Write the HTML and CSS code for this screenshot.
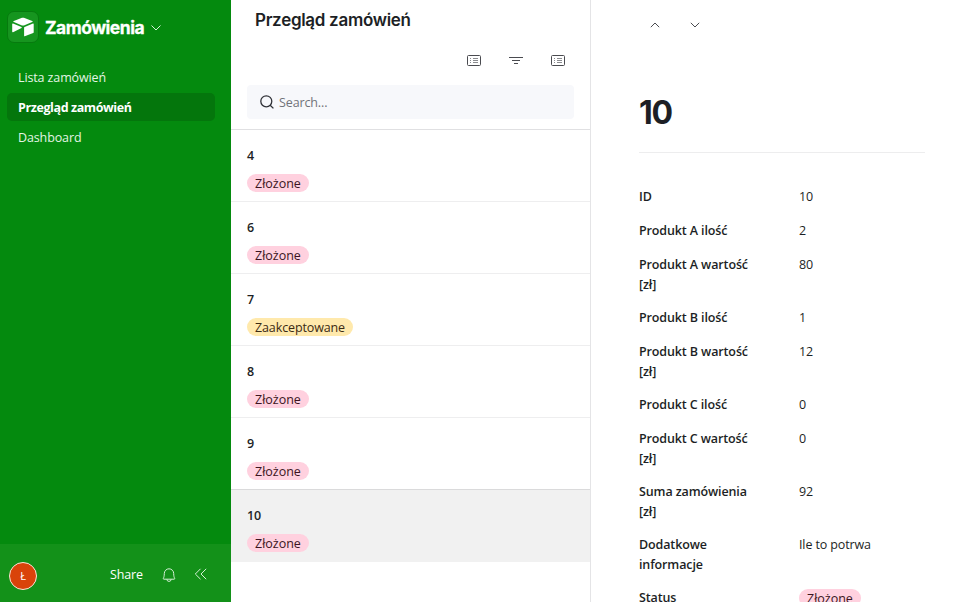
FILE: index.html
```html
<!DOCTYPE html>
<html lang="pl">
<head>
<meta charset="utf-8">
<title>Zamówienia</title>
<link rel="stylesheet" href="styles.css">
</head>
<body>
<div class="app">
  <aside class="sidebar">
    <header class="brand">
      <span class="logo"><svg width="24" height="20" viewBox="0 0 24 20" fill="#fff"><path d="M11 .8c.6-.2 1.300-.2 1.900 0l8.300 3.200c.6.3.6.9 0 1.100l-8.300 3.300c-.6.2-1.300.2-1.900 0L2.800 5.100c-.6-.2-.6-.8 0-1.100z"/><path d="M22.700 7v8.200c0 .4-.2.700-.5.800l-8.500 3.300c-.3.100-.6-.1-.6-.5v-8.200c0-.3.200-.6.5-.7L22 6.500c.4-.1.700.1.700.5z"/><path d="M10.500 11 2 15.200c-.4.200-.8 0-.8-.4V7c0-.4.400-.7.800-.5l8.500 3.600c.4.200.4.700 0 .9z"/></svg></span>
      <span class="brand-name">Zamówienia</span>
      <svg class="brand-chevron" width="12" height="8" viewBox="0 0 12 8"><path d="M1.500 1.500L6 6l4.500-4.500"/></svg>
    </header>
    <nav class="nav">
      <a class="nav-item">Lista zamówień</a>
      <a class="nav-item active">Przegląd zamówień</a>
      <a class="nav-item">Dashboard</a>
    </nav>
    <footer class="side-footer">
      <span class="avatar">Ł</span>
      <span class="share">Share</span>
      <svg class="bell" width="14" height="16" viewBox="0 0 14 16"><path d="M2.300 6.500a4.700 4.700 0 0 1 9.400 0c0 2.600.5 4 1 4.900.2.400 0 .8-.5.800H1.800c-.5 0-.7-.4-.5-.8.500-.9 1-2.300 1-4.900zM4.900 12.300a2.100 2.100 0 0 0 4.200 0"/></svg>
      <svg class="collapse" width="14" height="14" viewBox="0 0 14 14"><path d="M6.500 1.800L1.300 7l5.200 5.200M12.200 1.800L7 7l5.200 5.200"/></svg>
    </footer>
  </aside>

  <section class="list">
    <header class="list-header">
      <h1 class="list-title">Przegląd zamówień</h1>
      <div class="tools">
        <svg width="14" height="12" viewBox="0 0 14 12"><rect x=".5" y="1.500" width="13" height="10" rx="1"/><path class="fine" d="M3 4.500h1M6 4.500h5M3 6.500h1M6 6.500h5M3 8.500h1M6 8.500h5"/></svg>
        <svg width="14" height="12" viewBox="0 0 14 12"><path d="M0 3.500h14M3 6.500h8M5 9.500h4"/></svg>
        <svg width="14" height="12" viewBox="0 0 14 12"><rect x=".5" y="1.500" width="13" height="10" rx="1"/><path class="fine" d="M3 4.500h1M6 4.500h5M3 6.500h1M6 6.500h5M3 8.500h1M6 8.500h5"/></svg>
      </div>
      <div class="search">
        <svg width="14" height="14" viewBox="0 0 14 14"><circle cx="6.300" cy="6.300" r="5.500"/><path d="M10.200 10.200l3.200 3.200"/></svg>
        <span class="placeholder">Search...</span>
      </div>
    </header>
    <div class="records">
      <article class="record"><b class="record-id">4</b><span class="pill pink">Złożone</span></article>
      <article class="record"><b class="record-id">6</b><span class="pill pink">Złożone</span></article>
      <article class="record"><b class="record-id">7</b><span class="pill yellow">Zaakceptowane</span></article>
      <article class="record"><b class="record-id">8</b><span class="pill pink">Złożone</span></article>
      <article class="record before-selected"><b class="record-id">9</b><span class="pill pink">Złożone</span></article>
      <article class="record selected"><b class="record-id">10</b><span class="pill pink">Złożone</span></article>
    </div>
  </section>

  <main class="detail">
    <div class="pager">
      <svg width="10" height="6" viewBox="0 0 10 6"><path d="M.8 5.200L5 1l4.200 4.200"/></svg>
      <svg width="10" height="6" viewBox="0 0 10 6"><path d="M.8.800L5 5 9.200.800"/></svg>
    </div>
    <h2 class="detail-title">10</h2>
    <dl class="fields">
      <div class="field"><dt>ID</dt><dd>10</dd></div>
      <div class="field"><dt>Produkt A ilość</dt><dd>2</dd></div>
      <div class="field"><dt>Produkt A wartość [zł]</dt><dd>80</dd></div>
      <div class="field"><dt>Produkt B ilość</dt><dd>1</dd></div>
      <div class="field"><dt>Produkt B wartość [zł]</dt><dd>12</dd></div>
      <div class="field"><dt>Produkt C ilość</dt><dd>0</dd></div>
      <div class="field"><dt>Produkt C wartość [zł]</dt><dd>0</dd></div>
      <div class="field"><dt>Suma zamówienia [zł]</dt><dd>92</dd></div>
      <div class="field"><dt>Dodatkowe informacje</dt><dd>Ile to potrwa</dd></div>
      <div class="field"><dt>Status</dt><dd><span class="pill pink">Złożone</span></dd></div>
    </dl>
  </main>
</div>
</body>
</html>
```
FILE: styles.css
```css
* { box-sizing: border-box; }
body {
  margin: 0;
  font: 12.5px/19.5px "Open Sans", "Noto Sans", sans-serif;
  letter-spacing: -.12px;
  color: #1d1f25;
  background: #fff;
}
svg { display: block; flex: none; fill: none; stroke: #4a4b50; stroke-width: 1; }
.app { display: flex; width: 957px; height: 602px; overflow: hidden; }

.sidebar { display: flex; flex-direction: column; width: 231px; background: #048a0e; color: #e3f5e4; }
.brand { display: flex; align-items: center; height: 54px; padding-left: 7px; }
.logo {
  display: flex; align-items: center; justify-content: center;
  width: 32px; height: 32px; border-radius: 7px;
  background: #16951f; border: 1px solid #067a0e;
}
.logo svg { fill: #fff; stroke: none; }
.brand-name { margin-left: 6px; padding-top: 2px; font: 700 17.5px/24px Inter, sans-serif; letter-spacing: -.5px; color: #fff; -webkit-text-stroke: .3px #fff; }
.brand-chevron { margin: 2px 0 0 6px; stroke: #d5f0d6; }
.nav { display: flex; flex-direction: column; gap: 2px; padding: 9px 16px 0 7px; }
.nav-item { height: 28px; padding-left: 11px; line-height: 30px; border-radius: 5px; }
.nav-item.active { background: #04760c; color: #fff; font-weight: 700; letter-spacing: -.4px; }
.side-footer { display: flex; align-items: center; height: 58px; margin-top: auto; padding: 2px 23px 0 9px; background: #139119; }
.avatar {
  width: 28px; height: 28px; margin-top: 4px; border: 1.5px solid #fbe6d8; border-radius: 50%;
  background: #d9430a; color: #fff; font-size: 11px; line-height: 26px; text-align: center;
}
.share { margin-left: auto; padding-top: 2px; font-weight: 500; color: #fff; }
.bell { margin: 2px 0 0 19px; stroke: #d5f0d6; }
.collapse { margin-left: 18px; stroke: #d5f0d6; }

.list { width: 360px; border-right: 1px solid #e4e4e6; }
.list-header { height: 130px; padding: 8px 16px 0; border-bottom: 1px solid #e0e0e2; }
.list-title { margin: 0 0 0 8px; font: 600 17px/24px Inter, sans-serif; letter-spacing: -.3px; }
.tools { display: flex; justify-content: flex-end; gap: 28px; margin: 22px 9px 19px 0; }
.tools .fine { stroke: #8b8c90; }
.search { display: flex; align-items: center; gap: 5px; height: 34px; padding-left: 13px; border-radius: 4px; background: #f7f8fb; color: #717379; }
.search svg { stroke: #303238; stroke-width: 1.3; }
.placeholder { padding-top: 2px; }
.record { height: 72px; padding: 16px 16px 0; border-bottom: 1px solid #eeeeef; }
.record-id { display: block; margin-bottom: 8px; font-weight: 600; line-height: 20px; }
.record.before-selected { border-bottom-color: #dadadb; }
.record.selected { background: #f1f1f1; border-bottom-color: #f1f1f1; }
.pill { display: block; width: fit-content; height: 18px; padding: 0 8px; border-radius: 9px; line-height: 20px; }
.pill.pink { letter-spacing: 0; }
.pink { background: #ffd1df; color: #3b1522; }
.yellow { background: #ffe9ac; color: #3b2a12; }

.detail { flex: 1; padding: 22px 32px 0 48px; }
.pager { display: flex; gap: 30px; padding-left: 11px; }
.detail-title { height: 125px; margin: 0; padding-top: 65px; border-bottom: 1px solid #ededee; font: 700 32px/40px Inter, sans-serif; letter-spacing: -1.3px; }
.fields { display: flex; flex-direction: column; gap: 14px; margin: 34px 0 0; }
.field { display: grid; grid-template-columns: 128px 1fr; column-gap: 32px; min-height: 20px; }
.field dt { font-weight: 600; }
.field dd { margin: 0; }
.field .pill { margin-top: 1px; }
```
